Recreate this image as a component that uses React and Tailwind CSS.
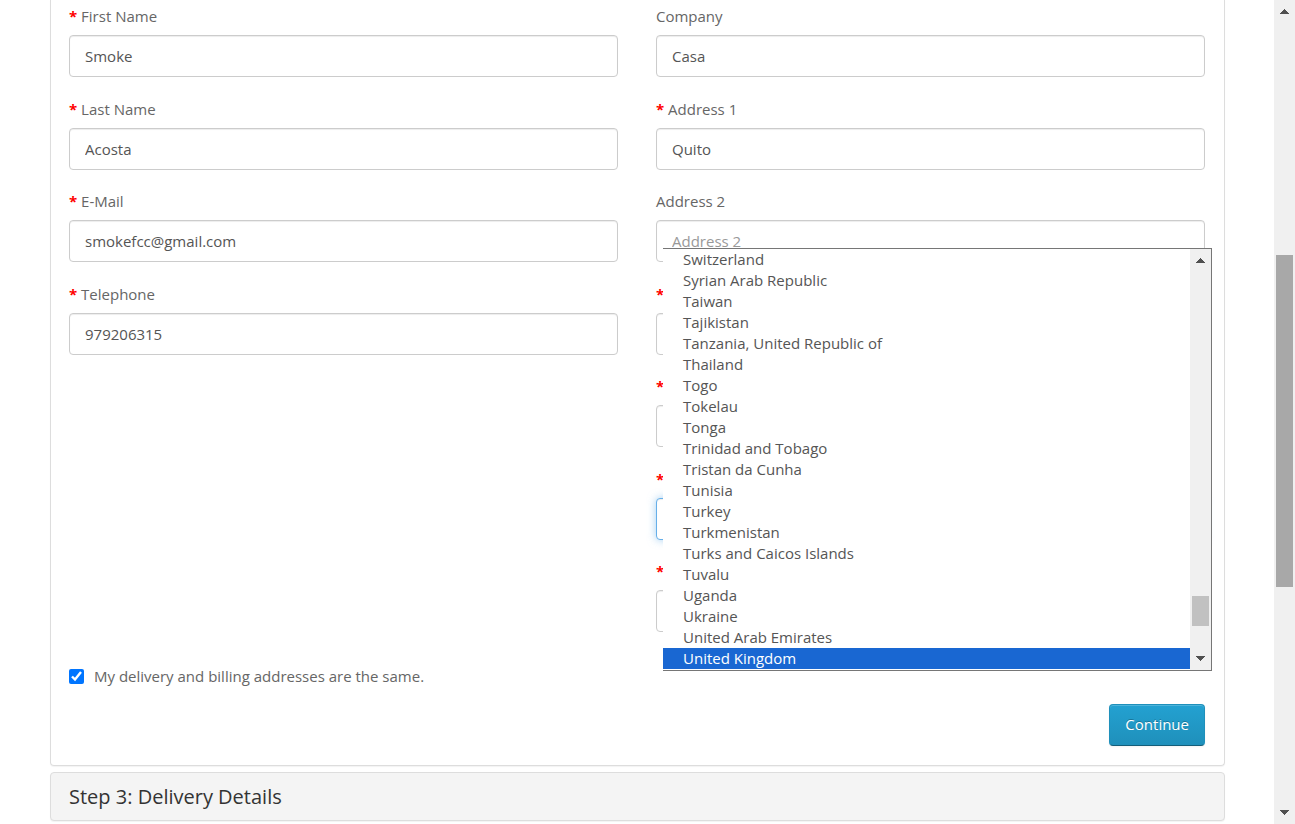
import React from "react";

const personalFields = [
  { id: "firstname", label: "First Name", value: "Smoke", required: true },
  { id: "lastname", label: "Last Name", value: "Acosta", required: true },
  { id: "email", label: "E-Mail", value: "smokefcc@gmail.com", required: true, type: "email" },
  { id: "telephone", label: "Telephone", value: "979206315", required: true, type: "tel" },
];

// Fields marked "covered" lie beneath the open country list.
const addressFields = [
  { id: "company", label: "Company", value: "Casa" },
  { id: "address-1", label: "Address 1", value: "Quito", required: true },
  { id: "address-2", label: "Address 2", value: "" },
  { id: "city", label: "City", value: "", required: true, covered: true },
  { id: "postcode", label: "Post Code", value: "", required: true, covered: true },
];

const countries = [
  "Switzerland",
  "Syrian Arab Republic",
  "Taiwan",
  "Tajikistan",
  "Tanzania, United Republic of",
  "Thailand",
  "Togo",
  "Tokelau",
  "Tonga",
  "Trinidad and Tobago",
  "Tristan da Cunha",
  "Tunisia",
  "Turkey",
  "Turkmenistan",
  "Turks and Caicos Islands",
  "Tuvalu",
  "Uganda",
  "Ukraine",
  "United Arab Emirates",
  "United Kingdom",
];

const controlBase =
  "block h-[42px] w-full rounded-[4px] border bg-white px-[15px] text-[15px] text-[#555] outline-none placeholder:text-[#999]";
const controlIdle = "border-[#ccc] shadow-[inset_0_1px_1px_rgba(0,0,0,0.075)]";
const controlActive =
  "border-[#66afe9] shadow-[inset_0_1px_1px_rgba(0,0,0,0.075),0_0_8px_rgba(102,175,233,0.6)]";

function Field({ id, label, required, covered, children }) {
  return (
    <div className="min-w-0">
      <label htmlFor={id} className="mb-2 block leading-[21px]">
        {required && <span className="font-bold text-[#f00]">* </span>}
        <span className={covered ? "invisible" : ""}>{label}</span>
      </label>
      {children}
    </div>
  );
}

function TextField({ id, label, value, required, covered, type = "text" }) {
  return (
    <Field id={id} label={label} required={required} covered={covered}>
      <input
        id={id}
        type={type}
        aria-label={label}
        defaultValue={value}
        placeholder={covered ? undefined : label}
        className={`${controlBase} ${controlIdle}`}
      />
    </Field>
  );
}

function Arrow({ down = false }) {
  return (
    <svg width="9" height="5" viewBox="0 0 9 5" fill="#505050" shapeRendering="crispEdges" aria-hidden="true">
      {down ? (
        <path d="M0 0H9V1H8V2H7V3H6V4H5V5H4V4H3V3H2V2H1V1H0Z" />
      ) : (
        <path d="M4 0H5V1H6V2H7V3H8V4H9V5H0V4H1V3H2V2H3V1H4Z" />
      )}
    </svg>
  );
}

function CountryList() {
  return (
    <div className="absolute -top-[250px] -right-[7px] left-[7px] z-10 flex border-y border-r border-[#767676] bg-white">
      <ul role="listbox" aria-label="Countries" className="min-w-0 flex-1 pb-px leading-[21px] text-[#555]">
        {countries.map((name) => {
          const selected = name === "United Kingdom";
          return (
            <li
              key={name}
              role="option"
              aria-selected={selected}
              className={selected ? "bg-[#1967d2] pl-5 text-white" : "pl-5"}
            >
              {name}
            </li>
          );
        })}
      </ul>
      <div className="flex w-[21px] flex-col items-center bg-[#f0f0f0] py-[9px]" aria-hidden="true">
        <Arrow />
        <div className="flex-[333]" />
        <div className="w-[17px] flex-[30] bg-[#c1c1c1]" />
        <div className="flex-[30]" />
        <Arrow down />
      </div>
    </div>
  );
}

function PageScrollbar() {
  return (
    <div className="flex w-[21px] shrink-0 flex-col items-center bg-[#f0f0f0] py-[9px]" aria-hidden="true">
      <Arrow />
      <div className="flex-[241]" />
      <div className="w-[17px] flex-[332] bg-[#a8a8a8]" />
      <div className="flex-[223]" />
      <Arrow down />
    </div>
  );
}

export default function App() {
  return (
    <div className="flex h-screen overflow-hidden bg-white font-['Open_Sans',sans-serif] text-[15px] text-[#666]">
      <main className="min-w-0 flex-1 overflow-hidden pr-[49px] pl-[50px]">
        <form
          onSubmit={(e) => e.preventDefault()}
          className="rounded-b-[4px] border-x border-b border-[#ddd] pt-[6px] pr-[19px] pb-[19px] pl-[18px] shadow-[0_1px_1px_rgba(0,0,0,0.05)]"
        >
          <div className="grid min-h-[648px] grid-cols-2 grid-rows-7 gap-x-[38px]">
            <section aria-label="Your Personal Details" className="row-span-7 grid grid-rows-subgrid">
              {personalFields.map((f) => (
                <TextField key={f.id} {...f} />
              ))}
            </section>
            <section aria-label="Your Address" className="row-span-7 grid grid-rows-subgrid">
              {addressFields.map((f) => (
                <TextField key={f.id} {...f} />
              ))}
              <Field id="country" label="Country" required covered>
                <div className="relative">
                  <select
                    id="country"
                    aria-label="Country"
                    defaultValue=""
                    className={`${controlBase} ${controlActive}`}
                  >
                    <option value="" />
                  </select>
                  <CountryList />
                </div>
              </Field>
              <Field id="zone" label="Region / State" required covered>
                <select
                  id="zone"
                  aria-label="Region / State"
                  defaultValue=""
                  className={`${controlBase} ${controlIdle}`}
                >
                  <option value="" />
                </select>
              </Field>
            </section>
          </div>
          <div className="mt-3 flex">
            <label className="flex items-center gap-[10px] leading-[21px]">
              <input type="checkbox" defaultChecked className="size-[15px] accent-[#0075ff]" />
              My delivery and billing addresses are the same.
            </label>
          </div>
          <div className="mt-[17px] flex justify-end">
            <button
              type="submit"
              className="h-[42px] rounded-[4px] border border-[#1f90bb] border-b-[#145e7a] bg-linear-to-b from-[#23a1d1] to-[#1f90bb] px-[15px] pb-[2px] text-white shadow-[inset_0_1px_0_rgba(255,255,255,0.2),0_1px_2px_rgba(0,0,0,0.05)] text-shadow-[0_-1px_0_rgba(0,0,0,0.25)]"
            >
              Continue
            </button>
          </div>
        </form>
        <section className="mt-[6px] rounded-[4px] border border-[#ddd] bg-[#f4f4f4] px-[18px] shadow-[0_1px_1px_rgba(0,0,0,0.05)]">
          <h4 className="text-xl leading-[47px] text-[#333]">Step 3: Delivery Details</h4>
        </section>
      </main>
      <PageScrollbar />
    </div>
  );
}
